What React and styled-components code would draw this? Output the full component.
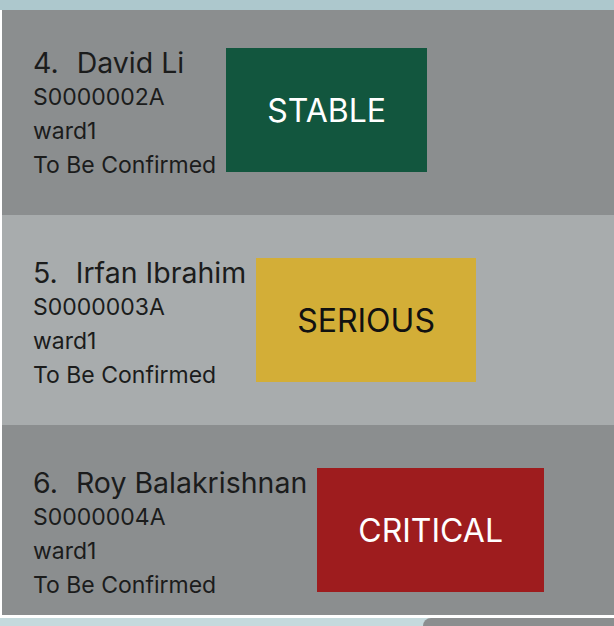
import React from "react";
import styled, { createGlobalStyle } from "styled-components";

const Global = createGlobalStyle`
  html, body { margin: 0; padding: 0; background: #ffffff; }
  body { font-family: Inter, "Noto Sans", sans-serif; color: #1b1c1c; }
`;

const Screen = styled.div`
  width: 614px;
  height: 626px;
  display: flex;
  flex-direction: column;
  overflow: hidden;
  background: #ffffff;
`;

const TopBar = styled.div`
  height: 10px;
  flex: none;
  background: #adc8cd;
`;

const Viewport = styled.div`
  flex: none;
  height: 605px;
  overflow: hidden;
  padding-left: 2px;
`;

const List = styled.div`
  margin-top: -5px;
  display: flex;
  flex-direction: column;
`;

const Row = styled.div`
  height: 210px;
  box-sizing: border-box;
  display: flex;
  align-items: center;
  gap: 10px;
  padding-left: 31px;
  background: ${(p) => (p.$alt ? "#a8acad" : "#8b8e8f")};
`;

const Info = styled.div`
  display: flex;
  flex-direction: column;
  padding-top: 8px;
`;

const Name = styled.div`
  font-size: 28.5px;
  line-height: 34px;
  white-space: nowrap;
`;

const Num = styled.span`
  margin-right: 18px;
`;

const Detail = styled.div`
  font-size: 23px;
  line-height: 34px;
  white-space: nowrap;
`;

const Badge = styled.div`
  height: 124px;
  padding: 0 41px;
  display: flex;
  align-items: center;
  justify-content: center;
  font-size: 32px;
  background: ${(p) => p.$bg};
  color: ${(p) => p.$fg};
`;

const Divider = styled.div`
  height: 3px;
  flex: none;
  background: #ffffff;
`;

const BottomBar = styled.div`
  flex: 1;
  background: #c5dadd;
  display: flex;
  justify-content: flex-end;
  align-items: flex-end;
`;

const Tab = styled.div`
  width: 191px;
  height: 8px;
  background: #8b8e8f;
  border-radius: 22px 0 0 0;
`;

const statusStyle = {
  STABLE: { bg: "#12563e", fg: "#ffffff" },
  SERIOUS: { bg: "#d3ae37", fg: "#111111" },
  CRITICAL: { bg: "#9e1c1e", fg: "#ffffff" },
};

const patients = [
  { n: 4, name: "David Li", id: "S0000002A", ward: "ward1", bed: "To Be Confirmed", status: "STABLE" },
  { n: 5, name: "Irfan Ibrahim", id: "S0000003A", ward: "ward1", bed: "To Be Confirmed", status: "SERIOUS" },
  { n: 6, name: "Roy Balakrishnan", id: "S0000004A", ward: "ward1", bed: "To Be Confirmed", status: "CRITICAL" },
];

export default function App() {
  return (
    <>
      <Global />
      <Screen>
        <TopBar />
        <Viewport>
          <List>
            {patients.map((p, i) => (
              <Row key={p.n} $alt={i % 2 === 1}>
                <Info>
                  <Name>
                    <Num>{p.n}.</Num>
                    {p.name}
                  </Name>
                  <Detail>{p.id}</Detail>
                  <Detail>{p.ward}</Detail>
                  <Detail>{p.bed}</Detail>
                </Info>
                <Badge $bg={statusStyle[p.status].bg} $fg={statusStyle[p.status].fg}>
                  {p.status}
                </Badge>
              </Row>
            ))}
          </List>
        </Viewport>
        <Divider />
        <BottomBar>
          <Tab />
        </BottomBar>
      </Screen>
    </>
  );
}
